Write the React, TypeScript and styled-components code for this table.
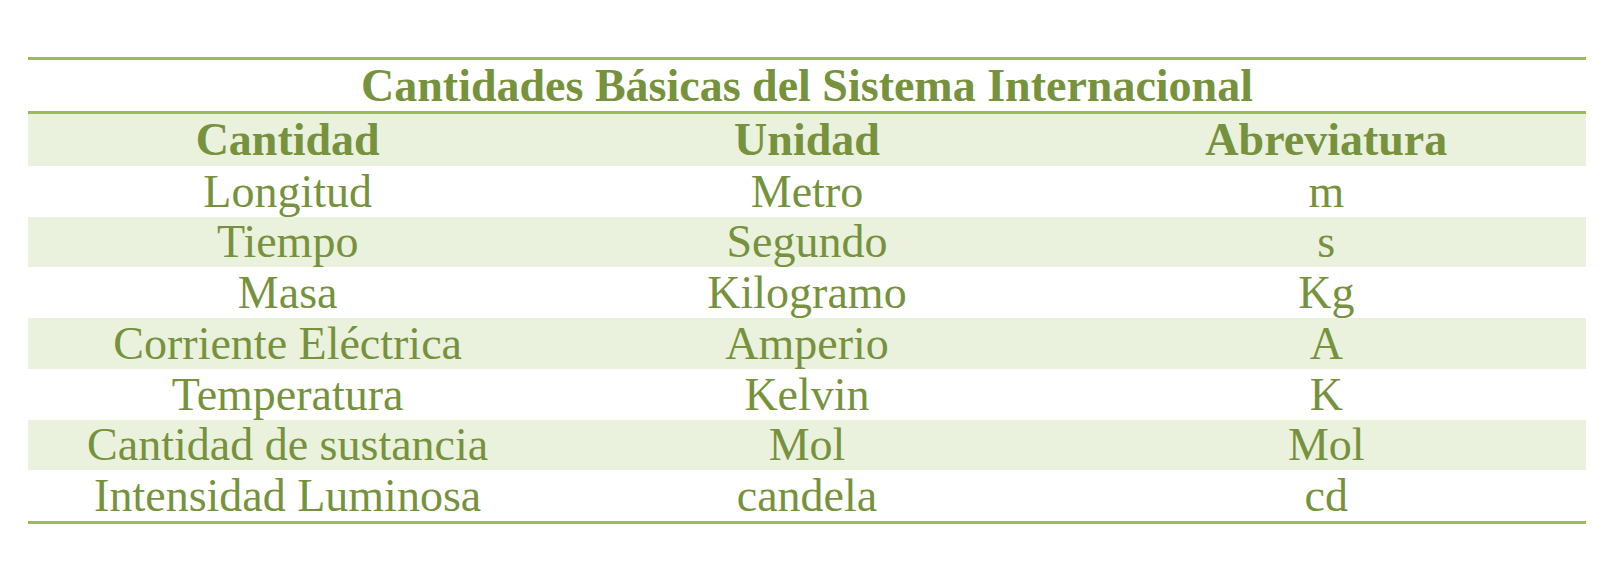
import React from "react";
import styled, { createGlobalStyle } from "styled-components";

const colors = {
  line: "#9bbb59",
  band: "#eaf1dd",
  text: "#76923c",
};

const GlobalStyle = createGlobalStyle`
  html, body {
    margin: 0;
    padding: 0;
    background: #ffffff;
  }
`;

const Page = styled.main`
  width: 1600px;
  height: 582px;
  padding: 57px 14px 0 28px;
  box-sizing: border-box;
  font-family: "Liberation Serif", "DejaVu Serif", serif;
  color: ${colors.text};
`;

const Table = styled.div`
  width: 1558px;
  border-top: 3px solid ${colors.line};
  border-bottom: 3px solid ${colors.line};
`;

const Title = styled.div`
  height: 51px;
  line-height: 51px;
  text-align: center;
  font-size: 46px;
  font-weight: bold;
  border-bottom: 3px solid ${colors.line};
`;

const Row = styled.div<{ $band?: boolean; $height: number }>`
  display: grid;
  grid-template-columns: repeat(3, 1fr);
  height: ${(p) => p.$height}px;
  line-height: ${(p) => p.$height}px;
  background: ${(p) => (p.$band ? colors.band : "transparent")};
`;

const Cell = styled.div<{ $bold?: boolean }>`
  text-align: center;
  font-size: 46px;
  font-weight: ${(p) => (p.$bold ? "bold" : "normal")};
  white-space: nowrap;
`;

const rows = [
  ["Longitud", "Metro", "m"],
  ["Tiempo", "Segundo", "s"],
  ["Masa", "Kilogramo", "Kg"],
  ["Corriente Eléctrica", "Amperio", "A"],
  ["Temperatura", "Kelvin", "K"],
  ["Cantidad de sustancia", "Mol", "Mol"],
  ["Intensidad Luminosa", "candela", "cd"],
];

const heights = [51, 50, 51, 51, 51, 50, 51];

export default function App() {
  return (
    <>
      <GlobalStyle />
      <Page>
        <Table>
          <Title>Cantidades Básicas del Sistema Internacional</Title>
          <Row $band $height={52}>
            <Cell $bold>Cantidad</Cell>
            <Cell $bold>Unidad</Cell>
            <Cell $bold>Abreviatura</Cell>
          </Row>
          {rows.map((r, i) => (
            <Row key={r[0]} $band={i % 2 === 1} $height={heights[i]}>
              {r.map((c, j) => (
                <Cell key={j}>{c}</Cell>
              ))}
            </Row>
          ))}
        </Table>
      </Page>
    </>
  );
}
